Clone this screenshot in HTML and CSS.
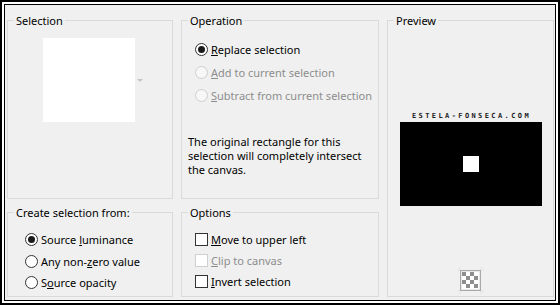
FILE: index.html
```html
<!DOCTYPE html>
<html lang="en">
<head>
    <meta charset="UTF-8">
    <meta name="viewport" content="width=device-width, initial-scale=1.0">
    <title>Selection from mask</title>
    <link rel="stylesheet" href="styles.css">
</head>
<body>
    <div class="frame">
        <div class="dialog">
            <fieldset class="group selection">
                <legend>Selection</legend>
                <div class="swatch-row">
                    <div class="swatch"></div>
                    <span class="drop"></span>
                </div>
            </fieldset>

            <fieldset class="group operation">
                <legend>Operation</legend>
                <div class="list op-list">
                    <label class="row"><span class="radio on"></span><span><u>R</u>eplace selection</span></label>
                    <label class="row off"><span class="radio"></span><span><u>A</u>dd to current selection</span></label>
                    <label class="row off"><span class="radio"></span><span><u>S</u>ubtract from current selection</span></label>
                </div>
                <p class="note">The original rectangle for this<br>selection will completely intersect<br>the canvas.</p>
            </fieldset>

            <fieldset class="group preview">
                <legend>Preview</legend>
                <div class="mark">ESTELA-FONSECA.COM</div>
                <div class="canvas"><div class="dot"></div></div>
                <svg class="checker" width="29" height="29" viewBox="0 0 29 29">
                    <!-- faint corner ticks -->
                    <path d="M1 4h3M4 1v3M25 4h3M25 1v3M1 25h3M4 25v3M25 25h3M25 25v3" stroke="#e2e2e2" stroke-width="1" fill="none"/>
                    <rect x="4.5" y="4.5" width="20" height="20" fill="#e8e8e8" stroke="#a9a9a9"/>
                    <rect x="6" y="6" width="17" height="17" fill="#fff"/>
                    <g fill="#8e8e8e">
                        <rect x="6" y="6" width="4" height="4"/>
                        <rect x="14" y="6" width="4" height="4"/>
                        <rect x="10" y="10" width="4" height="4"/>
                        <rect x="18" y="10" width="4" height="4"/>
                        <rect x="6" y="14" width="4" height="4"/>
                        <rect x="14" y="14" width="4" height="4"/>
                        <rect x="10" y="18" width="4" height="4"/>
                        <rect x="18" y="18" width="4" height="4"/>
                    </g>
                </svg>
            </fieldset>

            <fieldset class="group create">
                <legend>Create selection from:</legend>
                <div class="list src-list">
                    <label class="row"><span class="radio on"></span><span>Source <u>l</u>uminance</span></label>
                    <label class="row"><span class="radio"></span><span>Any non-<u>z</u>ero value</span></label>
                    <label class="row"><span class="radio"></span><span>S<u>o</u>urce opacity</span></label>
                </div>
            </fieldset>

            <fieldset class="group options">
                <legend>Options</legend>
                <div class="list opt-list">
                    <label class="row"><span class="check"></span><span><u>M</u>ove to upper left</span></label>
                    <label class="row off"><span class="check"></span><span><u>C</u>lip to canvas</span></label>
                    <label class="row"><span class="check"></span><span><u>I</u>nvert selection</span></label>
                </div>
            </fieldset>
        </div>
    </div>
</body>
</html>
```

FILE: styles.css
```css
html,
body {
    margin: 0;
    padding: 0;
    background: #fff;
    font-family: 'Noto Sans', 'Open Sans', sans-serif;
    font-size: 11px;
    color: #000;
}

.frame {
    width: 560px;
    height: 305px;
    box-sizing: border-box;
    border: 2px solid #000;
    padding: 2px;
    background: #fff;
}

.dialog {
    height: 100%;
    box-sizing: border-box;
    border: 1px solid #000;
    background: #f0f0f0;
    display: grid;
    grid-template-columns: 166px 198px 167px;
    grid-template-rows: 186px 92px;
    column-gap: 8px;
    row-gap: 6px;
    padding: 8px 0 0 2px;
}

.group {
    margin: 0;
    padding: 0 6px;
    min-width: 0;
    border: 1px solid #dadada;
    box-sizing: border-box;
}

.group legend {
    padding: 0 2px;
    line-height: 15px;
}

.preview {
    grid-column: 3;
    grid-row: 1 / span 2;
    display: flex;
    flex-direction: column;
    align-items: center;
}

/* selection swatch */
.swatch-row {
    display: flex;
    align-items: center;
    margin: 10px 0 0 29px;
}

.swatch {
    width: 92px;
    height: 84px;
    background: #fff;
}

.drop {
    width: 0;
    height: 0;
    margin-left: 2px;
    border-left: 3px solid transparent;
    border-right: 3px solid transparent;
    border-top: 3px solid #c4c4c4;
}

/* radio and check rows */
.list {
    display: flex;
    flex-direction: column;
}

.row {
    display: flex;
    align-items: center;
    gap: 3px;
    white-space: nowrap;
}

.row.off {
    color: #8d8d8d;
}

.op-list {
    margin: 10px 0 0 7px;
}

.op-list .row {
    height: 23px;
}

.src-list {
    margin: 9px 0 0 11px;
}

.src-list .row {
    height: 21.5px;
}

.opt-list {
    margin: 9px 0 0 7px;
}

.opt-list .row {
    height: 21px;
}

.radio {
    width: 13px;
    height: 13px;
    box-sizing: border-box;
    border: 1px solid #333;
    border-radius: 50%;
    background: #fff;
    display: flex;
    align-items: center;
    justify-content: center;
    flex: none;
}

.radio.on::after {
    content: '';
    width: 7px;
    height: 7px;
    border-radius: 50%;
    background: #1a1a1a;
}

.row.off .radio {
    border-color: #cfcfcf;
    background: #f7f7f7;
}

.check {
    width: 13px;
    height: 13px;
    box-sizing: border-box;
    border: 1px solid #333;
    background: #fff;
    flex: none;
}

.row.off .check {
    border-color: #cfcfcf;
}

.note {
    margin: 28px 0 0 0;
    line-height: 14px;
    white-space: nowrap;
}

/* preview */
.mark {
    margin-top: 85px;
    font-family: 'DejaVu Sans Mono', monospace;
    font-size: 7px;
    font-weight: bold;
    letter-spacing: 2.4px;
    line-height: 7px;
    color: #1c1c1c;
    padding-left: 2px;
}

.canvas {
    margin-top: 2px;
    width: 142px;
    height: 84px;
    background: #000;
    display: flex;
    align-items: center;
    justify-content: center;
}

.dot {
    width: 16px;
    height: 16px;
    background: #fff;
}

.checker {
    margin-top: 60px;
    display: block;
}
```
